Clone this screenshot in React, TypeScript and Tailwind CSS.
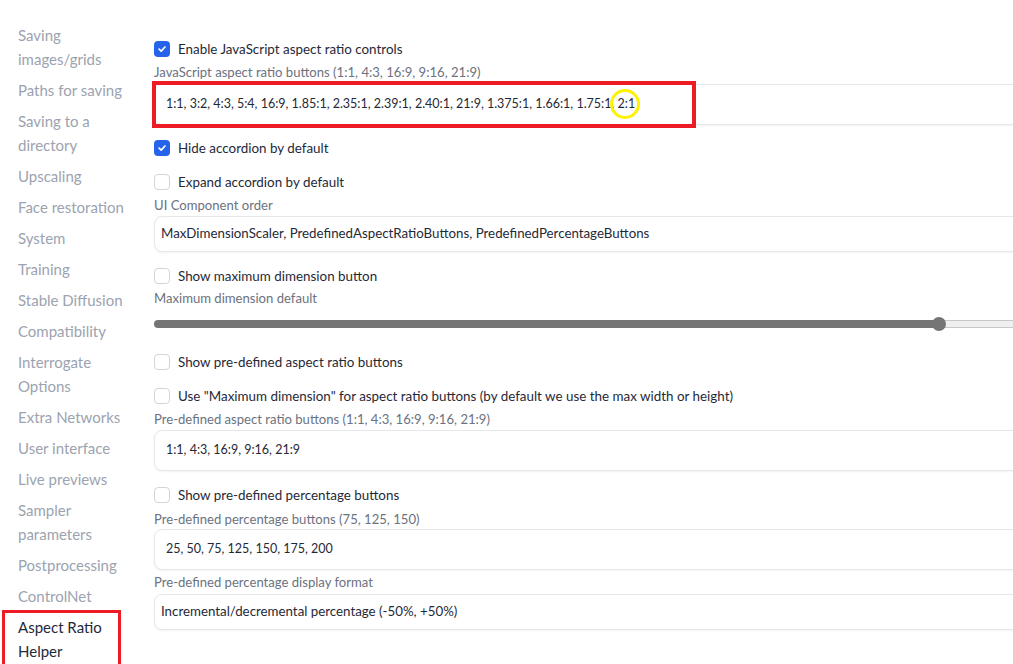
import React from "react";

const navItems = [
  "Saving images/grids",
  "Paths for saving",
  "Saving to a directory",
  "Upscaling",
  "Face restoration",
  "System",
  "Training",
  "Stable Diffusion",
  "Compatibility",
  "Interrogate Options",
  "Extra Networks",
  "User interface",
  "Live previews",
  "Sampler parameters",
  "Postprocessing",
  "ControlNet",
];

const font = { fontFamily: "Lato, 'Liberation Sans', sans-serif" };

const Checkbox = ({ checked, label }: { checked?: boolean; label: string }) => (
  <label className="flex items-center gap-2 h-[20px]">
    {checked ? (
      <span className="w-4 h-4 rounded-[4px] bg-[#2563eb] flex items-center justify-center">
        <svg width="10" height="10" viewBox="0 0 12 12" fill="none">
          <path d="M2.5 6.2 5 8.6 9.6 3.6" stroke="white" strokeWidth="2" strokeLinecap="round" strokeLinejoin="round" />
        </svg>
      </span>
    ) : (
      <span className="w-4 h-4 rounded-[4px] border border-[#d1d5db] bg-white" />
    )}
    <span className="text-[13.4px] text-[#1f2937]">{label}</span>
  </label>
);

const FieldLabel = ({ children }: { children: React.ReactNode }) => (
  <div className="text-[13.1px] text-[#6b7280] h-[18px] leading-[18px]">{children}</div>
);

// textarea-like box (smaller text) vs dropdown-like box
const TextBox = ({ children }: { children: React.ReactNode }) => (
  <div className="h-[41px] pl-[11px] flex items-center border border-[#e5e7eb] rounded-l-lg bg-white text-[12.5px] text-[#1f2937] shadow-[0_1px_2px_rgba(0,0,0,0.05)]">
    {children}
  </div>
);

const Dropdown = ({ children }: { children: React.ReactNode }) => (
  <div className="h-[36px] pl-[6px] flex items-center border border-[#e5e7eb] rounded-l-lg bg-white text-[13.3px] text-[#1f2937] shadow-[0_1px_2px_rgba(0,0,0,0.05)]">
    {children}
  </div>
);

export default function App() {
  return (
    <div className="w-[1013px] h-[664px] overflow-hidden bg-white flex" style={font}>
      {/* Sidebar */}
      <nav className="w-[154px] shrink-0 pl-[18px] pt-[23px] relative">
        <div className="flex flex-col gap-[7px]">
          {navItems.map((item) => (
            <div key={item} className="text-[15px] leading-[24px] text-[#9ca3af] w-[110px]">
              {item}
            </div>
          ))}
          <div className="relative text-[15px] leading-[24px] text-[#1e293b] w-[90px]">
            Aspect Ratio Helper
            <div className="absolute -left-[16px] -top-[5px] w-[119px] h-[59px] border-[3px] border-[#ed1c24]" />
          </div>
        </div>
      </nav>

      {/* Settings */}
      <main className="w-[900px] shrink-0 pt-[39px] flex flex-col">
        <Checkbox checked label="Enable JavaScript aspect ratio controls" />
        <div className="mt-[4px]">
          <FieldLabel>JavaScript aspect ratio buttons (1:1, 4:3, 16:9, 9:16, 21:9)</FieldLabel>
        </div>
        <div className="mt-[3px] relative">
          <TextBox>
            1:1, 3:2, 4:3, 5:4, 16:9, 1.85:1, 2.35:1, 2.39:1, 2.40:1, 21:9, 1.375:1, 1.66:1, 1.75:1, 2:1
          </TextBox>
          <div className="absolute -left-[2px] -top-[3px] w-[544px] h-[47px] border-[4px] border-[#ed1c24]" />
          <div className="absolute left-[456px] top-[5px] w-[30px] h-[30px] rounded-full border-[3px] border-[#fff200]" />
        </div>

        <div className="mt-[13px]">
          <Checkbox checked label="Hide accordion by default" />
        </div>
        <div className="mt-[14px]">
          <Checkbox label="Expand accordion by default" />
        </div>
        <div className="mt-[4px]">
          <FieldLabel>UI Component order</FieldLabel>
        </div>
        <div className="mt-[2px]">
          <Dropdown>MaxDimensionScaler, PredefinedAspectRatioButtons, PredefinedPercentageButtons</Dropdown>
        </div>

        <div className="mt-[14px]">
          <Checkbox label="Show maximum dimension button" />
        </div>
        <div className="mt-[3px]">
          <FieldLabel>Maximum dimension default</FieldLabel>
        </div>
        <div className="mt-[9px] h-[16px] flex items-center">
          <div className="w-[785px] h-[8px] rounded-l-full bg-[#757575]" />
          <div className="w-[14px] h-[14px] rounded-full bg-[#757575] -ml-[7px] relative z-10" />
          <div className="flex-1 h-[8px] bg-[#efefef] border border-[#c8c8c8] -ml-[7px]" />
        </div>

        <div className="mt-[20px]">
          <Checkbox label="Show pre-defined aspect ratio buttons" />
        </div>
        <div className="mt-[14px]">
          <Checkbox label={'Use "Maximum dimension" for aspect ratio buttons (by default we use the max width or height)'} />
        </div>
        <div className="mt-[4px]">
          <FieldLabel>Pre-defined aspect ratio buttons (1:1, 4:3, 16:9, 9:16, 21:9)</FieldLabel>
        </div>
        <div className="mt-[2px]">
          <TextBox>1:1, 4:3, 16:9, 9:16, 21:9</TextBox>
        </div>

        <div className="mt-[14px]">
          <Checkbox label="Show pre-defined percentage buttons" />
        </div>
        <div className="mt-[5px]">
          <FieldLabel>Pre-defined percentage buttons (75, 125, 150)</FieldLabel>
        </div>
        <div className="mt-[1px]">
          <TextBox>25, 50, 75, 125, 150, 175, 200</TextBox>
        </div>
        <div className="mt-[3px]">
          <FieldLabel>Pre-defined percentage display format</FieldLabel>
        </div>
        <div className="mt-[3px]">
          <Dropdown>Incremental/decremental percentage (-50%, +50%)</Dropdown>
        </div>
      </main>
    </div>
  );
}
